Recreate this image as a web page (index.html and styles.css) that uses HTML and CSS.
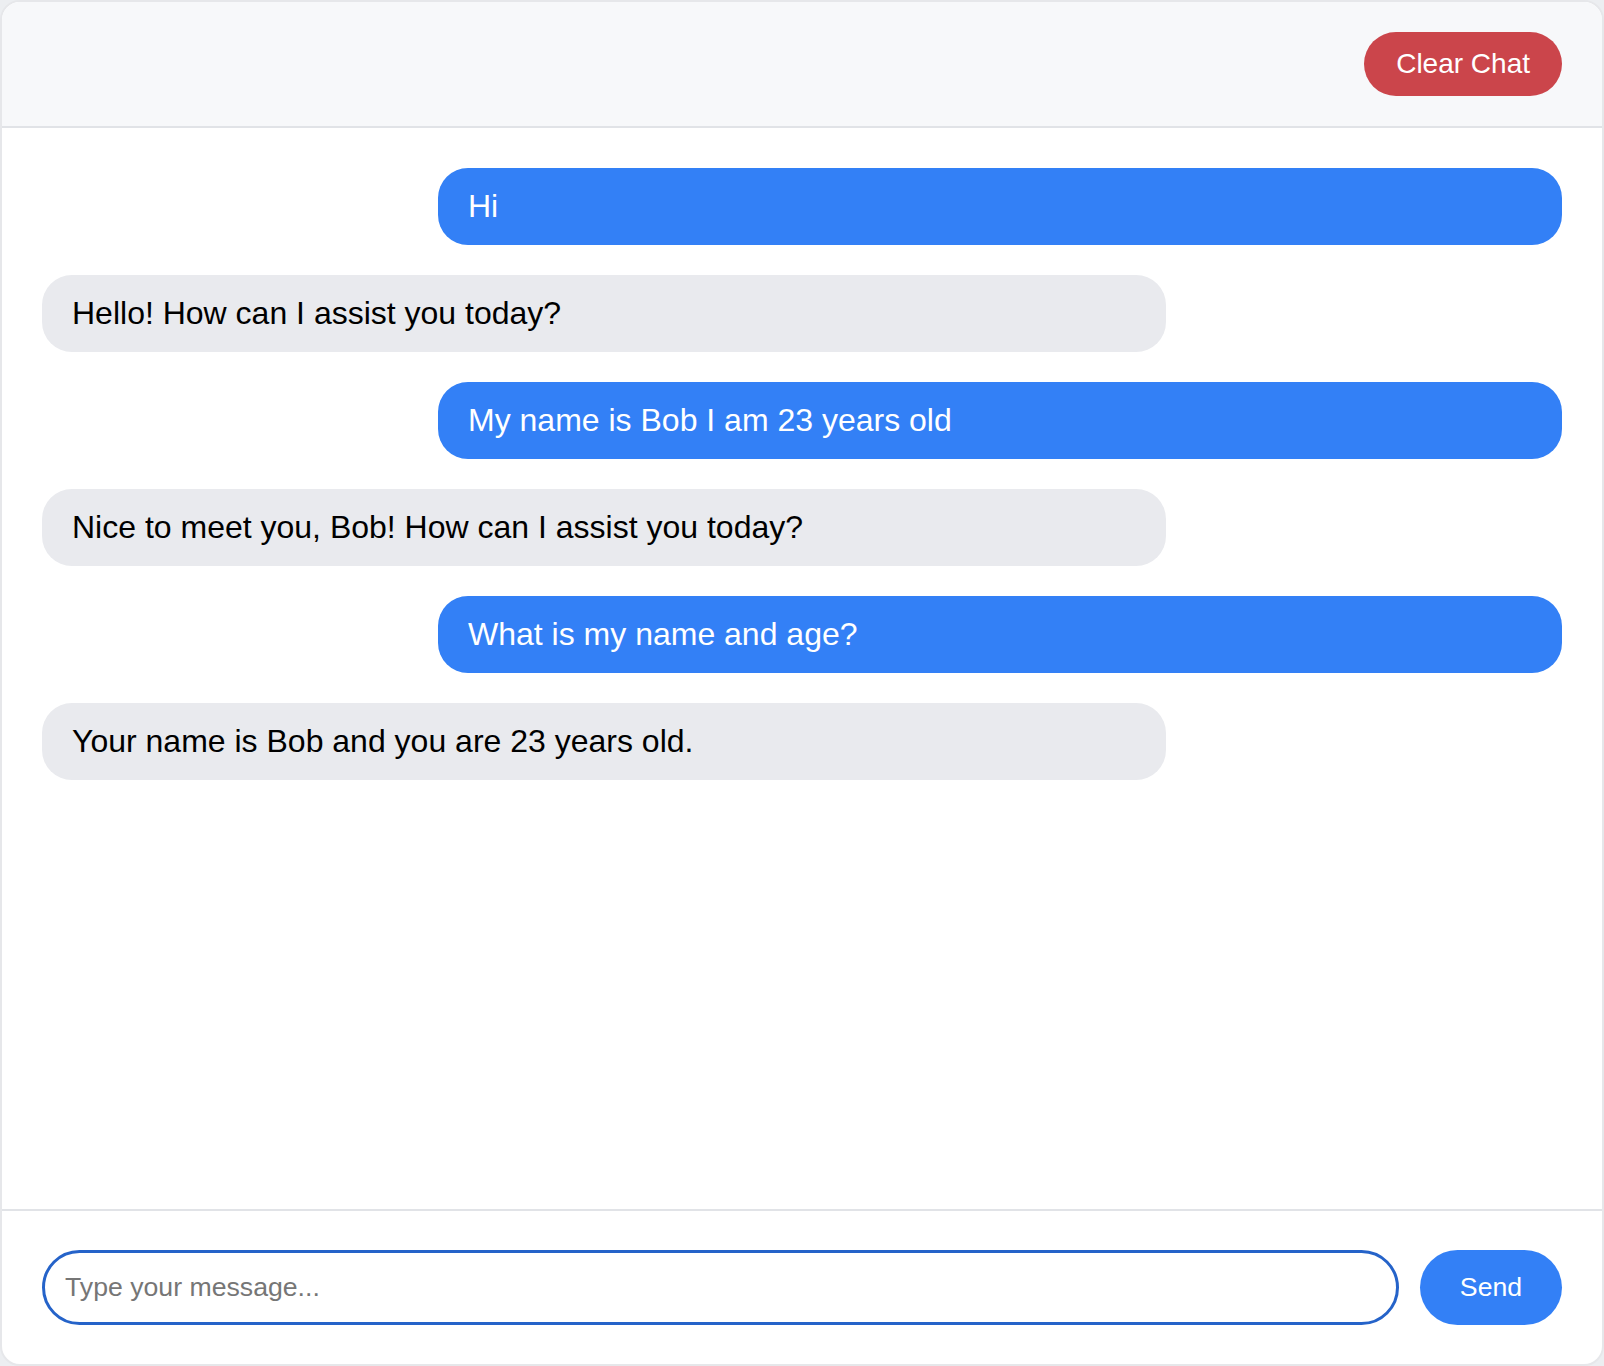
FILE: index.html
```html
<!DOCTYPE html>
<html lang="en">
<head>
<meta charset="utf-8">
<title>Chat</title>
<link rel="stylesheet" href="styles.css">
</head>
<body>
<div class="app">
  <header class="header">
    <button class="clear-btn">Clear Chat</button>
  </header>
  <main class="messages">
    <div class="msg user">Hi</div>
    <div class="msg bot">Hello! How can I assist you today?</div>
    <div class="msg user">My name is Bob I am 23 years old</div>
    <div class="msg bot">Nice to meet you, Bob! How can I assist you today?</div>
    <div class="msg user">What is my name and age?</div>
    <div class="msg bot">Your name is Bob and you are 23 years old.</div>
  </main>
  <footer class="composer">
    <input class="input" type="text" placeholder="Type your message...">
    <button class="send-btn">Send</button>
  </footer>
</div>
</body>
</html>
```
FILE: styles.css
```css
* { box-sizing: border-box; }
html, body { margin: 0; padding: 0; }
body {
  background: #eceef1;
  font-family: "Liberation Sans", Arial, Helvetica, sans-serif;
  height: 1366px;
}
.app {
  height: 1366px;
  border: 2px solid #e6e7ea;
  border-radius: 20px;
  background: #ffffff;
  display: flex;
  flex-direction: column;
  overflow: hidden;
}
.header {
  background: #f7f8fa;
  padding: 30px 40px;
  border-bottom: 2px solid #e1e3e7;
  display: flex;
  justify-content: flex-end;
}
.clear-btn {
  background: #cb454b;
  color: #ffffff;
  border: none;
  border-radius: 32px;
  height: 64px;
  padding: 0 32px;
  font-family: "Liberation Sans", Arial, Helvetica, sans-serif;
  font-size: 28px;
  cursor: pointer;
}
.messages {
  flex: 1;
  padding: 40px;
  display: flex;
  flex-direction: column;
  gap: 30px;
}
.msg {
  box-sizing: content-box;
  width: 70%;
  padding: 20px 30px;
  border-radius: 30px;
  font-size: 32px;
  line-height: 37px;
}
.msg.user {
  align-self: flex-end;
  background: #3380f6;
  color: #ffffff;
}
.msg.bot {
  align-self: flex-start;
  background: #e9eaee;
  color: #000000;
}
.composer {
  border-top: 2px solid #e1e3e7;
  padding: 39px 40px 39px;
  display: flex;
  gap: 21px;
  align-items: center;
}
.input {
  flex: 1;
  height: 75px;
  border: 3px solid #2563c9;
  border-radius: 38px;
  padding: 0 20px;
  font-family: "Liberation Sans", Arial, Helvetica, sans-serif;
  font-size: 26.67px;
  outline: none;
  color: #000;
}
.input::placeholder { color: #767676; }
.send-btn {
  height: 75px;
  width: 142px;
  border: none;
  border-radius: 38px;
  background: #3380f6;
  color: #ffffff;
  font-family: "Liberation Sans", Arial, Helvetica, sans-serif;
  font-size: 26.67px;
  cursor: pointer;
}
```
